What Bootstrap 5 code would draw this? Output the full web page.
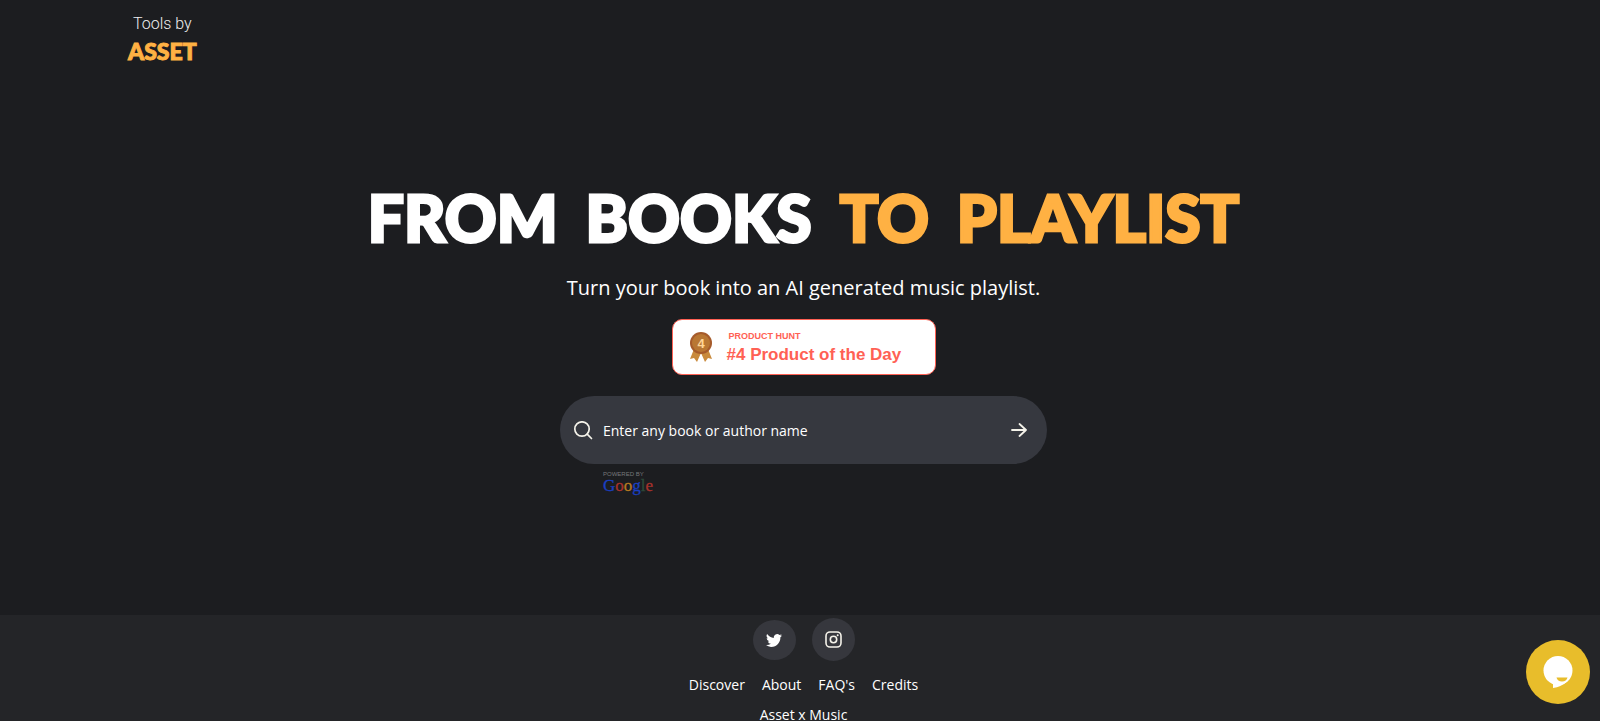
<!DOCTYPE html>
<html lang="en">
<head>
<meta charset="utf-8">
<meta name="viewport" content="width=device-width, initial-scale=1">
<title>From Books to Playlist</title>
<link href="https://cdn.jsdelivr.net/npm/bootstrap@5.3.0/dist/css/bootstrap.min.css" rel="stylesheet">
<style>
  body { background: #1c1d20; color: #fff; font-family: "Open Sans", "Noto Sans", sans-serif; }
  .page { padding-left: 7px; }
  .brand { margin-left: 121px; padding-top: 12px; height: 76px; width: 80px; }
  .brand-top { font-family: Roboto, sans-serif; font-weight: 300; font-size: 16px; line-height: 24px; color: #eee; padding-left: 5px; }
  .brand-name { font-family: Lato, sans-serif; font-weight: 900; font-size: 23px; line-height: 30px; -webkit-text-stroke: 1px currentColor; }
  .accent { color: #ffb143; }
  .hero { padding-top: 97px; }
  .hero h1 { font-family: Lato, sans-serif; font-weight: 900; font-size: 64px; line-height: 90px; margin: 0; column-gap: 28px; -webkit-text-stroke: 3px currentColor; }
  .tagline { font-size: 20px; line-height: 32px; margin: 9px 0 15px; }
  .award { width: 264px; height: 56px; background: #fff; border: 1px solid #ff6154; border-radius: 10px; color: #ff6154; font-family: "Liberation Sans", sans-serif; font-weight: 700; padding-left: 16px; }
  .award:hover { color: #ff6154; }
  .award-text { margin-left: 14px; padding-top: 4px; }
  .award-small { font-size: 9px; line-height: 12px; padding-left: 2px; }
  .award-big { font-size: 17px; line-height: 26px; }
  .search-wrap { width: 487px; max-width: 100%; margin-top: 21px; }
  .search-bar { height: 68px; border-radius: 34px; background: #36383f; padding: 0 16px 0 13px; }
  .search-bar input { font-size: 14px; color: #fff; min-width: 0; margin-left: 10px; }
  .search-bar input::placeholder { color: #fff; opacity: 1; }
  .powered { padding: 6px 0 0 43px; text-align: left; }
  .powered-by { font-family: "Liberation Sans", sans-serif; font-size: 6px; line-height: 8px; color: #77787b; }
  .powered-logo { font-family: "Liberation Serif", serif; font-size: 17px; line-height: 16px; -webkit-text-stroke: 0.3px currentColor; }
  .g-blue { color: #1a3fc0; } .g-red { color: #a8322c; } .g-gold { color: #b57a20; } .g-dim { color: #2c4a3a; }
  .site-footer { background: #242528; height: 106px; padding: 3px 0 0 7px; }
  .social { width: 43px; height: 43px; background: #36373d; color: #fff; }
  .social.short-pill { height: 40px; }
  .site-footer nav { margin-top: 12px; column-gap: 17px; }
  .site-footer nav a, .credit { color: #fff; font-size: 14px; line-height: 24px; }
  .credit { margin-top: 6px; }
  .chat { right: 10px; bottom: 17px; width: 64px; height: 64px; background: #e8bd2b; }
</style>
</head>
<body class="vh-100 overflow-hidden d-flex flex-column">
<div class="page flex-grow-1">
  <header>
    <a class="brand d-block text-decoration-none" href="#">
      <span class="brand-top d-block">Tools by</span>
      <span class="brand-name accent d-block">ASSET</span>
    </a>
  </header>
  <main class="hero d-flex flex-column align-items-center text-center">
    <h1 class="d-flex flex-wrap justify-content-center"><span>FROM</span> <span>BOOKS</span> <span class="accent">TO</span> <span class="accent">PLAYLIST</span></h1>
    <p class="tagline">Turn your book into an AI generated music playlist.</p>
    <a class="award d-flex align-items-center text-decoration-none text-start" href="#">
      <svg width="24" height="32" viewBox="0 0 24 32" aria-hidden="true">
        <path d="M5 18 1 28l4-1 3 4 4-9 4 9 3-4 4 1-4-10z" fill="#c98a3c"/>
        <circle cx="12" cy="12" r="11" fill="#a65b2b"/><circle cx="12" cy="12" r="9" fill="#b97733"/>
        <text x="12" y="17" text-anchor="middle" font-size="13" fill="#ffd596">4</text>
      </svg>
      <span class="award-text">
        <span class="award-small d-block">PRODUCT HUNT</span>
        <span class="award-big d-block">#4 Product of the Day</span>
      </span>
    </a>
    <div class="search-wrap">
      <form class="search-bar d-flex align-items-center">
        <svg width="20" height="20" viewBox="0 0 20 20" fill="none" stroke="#f5f3ea" stroke-width="1.7" stroke-linecap="round" aria-hidden="true"><circle cx="9" cy="9" r="7.2"/><path d="m14.2 14.2 4.3 4.3"/></svg>
        <input class="flex-grow-1 border-0 bg-transparent p-0" type="text" aria-label="Book or author name" placeholder="Enter any book or author name">
        <button class="btn border-0 p-0" type="button" aria-label="Search">
          <svg class="d-block" width="24" height="24" viewBox="0 0 24 24" fill="none" stroke="#f5f3ea" stroke-width="1.8" stroke-linecap="round" stroke-linejoin="round"><path d="M5 12h14M12.500 6l6.500 6-6.500 6"/></svg>
        </button>
      </form>
      <div class="powered">
        <div class="powered-by">POWERED BY</div>
        <div class="powered-logo"><span class="g-blue">G</span><span class="g-red">o</span><span class="g-gold">o</span><span class="g-blue">g</span><span class="g-dim">l</span><span class="g-red">e</span></div>
      </div>
    </div>
  </main>
</div>
<footer class="site-footer flex-shrink-0 text-center">
  <div class="d-flex justify-content-center align-items-center gap-3">
    <a class="social short-pill rounded-circle d-flex align-items-center justify-content-center" href="#" aria-label="Twitter">
      <svg width="16" height="16" viewBox="0 0 16 16" fill="currentColor"><path d="M5.026 15c6.038 0 9.341-5.003 9.341-9.334 0-.14 0-.282-.006-.422A6.685 6.685 0 0 0 16 3.542a6.658 6.658 0 0 1-1.889.518 3.301 3.301 0 0 0 1.447-1.817 6.533 6.533 0 0 1-2.087.793A3.286 3.286 0 0 0 7.875 6.030 9.325 9.325 0 0 1 1.114 2.100 3.289 3.289 0 0 0 2.132 6.480 3.203 3.203 0 0 1 .64 6.077v.041a3.288 3.288 0 0 0 2.632 3.218 3.203 3.203 0 0 1-.865.115 3.230 3.230 0 0 1-.614-.057 3.283 3.283 0 0 0 3.067 2.277A6.588 6.588 0 0 1 0 13.030 9.344 9.344 0 0 0 5.026 15z"/></svg>
    </a>
    <a class="social rounded-circle d-flex align-items-center justify-content-center" href="#" aria-label="Instagram">
      <svg width="17" height="17" viewBox="0 0 17 17" fill="none" stroke="#f5f3ea" stroke-width="1.6"><rect x="1" y="1" width="15" height="15" rx="4"/><circle cx="8.500" cy="8.500" r="3.200"/><circle cx="12.700" cy="4.300" r="1" fill="#f5f3ea" stroke="none"/></svg>
    </a>
  </div>
  <nav class="d-flex justify-content-center" aria-label="Footer">
    <a class="text-decoration-none" href="#">Discover</a>
    <a class="text-decoration-none" href="#">About</a>
    <a class="text-decoration-none" href="#">FAQ's</a>
    <a class="text-decoration-none" href="#">Credits</a>
  </nav>
  <div class="credit">Asset x Music</div>
</footer>
<button class="chat btn border-0 rounded-circle p-0 position-fixed d-flex align-items-center justify-content-center" type="button" aria-label="Open chat">
  <svg width="30" height="32" viewBox="0 0 30 32"><circle cx="15" cy="14.500" r="14.500" fill="#fff"/><path d="M10 26v6q8-1 15-7z" fill="#fff"/><path d="M13.500 21.500h11q-1 4-5.500 4t-5.500-4z" fill="#e8bd2b"/></svg>
</button>
<script src="https://cdn.jsdelivr.net/npm/bootstrap@5.3.0/dist/js/bootstrap.bundle.min.js"></script>
</body>
</html>
